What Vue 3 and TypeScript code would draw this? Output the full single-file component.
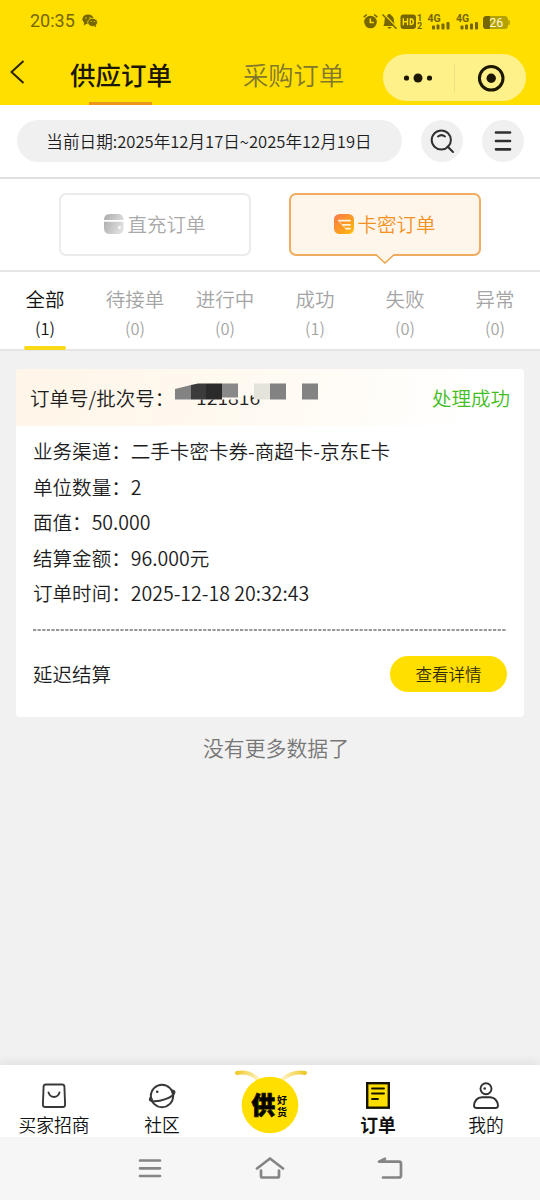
<script setup lang="ts">
interface Tab { name: string; count: number }
interface Row { label: string; value: string }

const tabs: Tab[] = [
  { name: '全部', count: 1 },
  { name: '待接单', count: 0 },
  { name: '进行中', count: 0 },
  { name: '成功', count: 1 },
  { name: '失败', count: 0 },
  { name: '异常', count: 0 },
]
const rows: Row[] = [
  { label: '业务渠道', value: '二手卡密卡券-商超卡-京东E卡' },
  { label: '单位数量', value: '2' },
  { label: '面值', value: '50.000' },
  { label: '结算金额', value: '96.000元' },
  { label: '订单时间', value: '2025-12-18 20:32:43' },
]
</script>

<template>
  <div class="screen">
    <header class="top">
      <div class="status">
        <span class="clock">20:35</span>
        <svg class="wechat" width="16" height="14" viewBox="0 0 16 14">
          <ellipse cx="6" cy="5.2" rx="5.6" ry="4.8" />
          <path d="M2 8 1.8 11.4 5 9.6Z" />
          <ellipse cx="10.6" cy="8.4" rx="4.9" ry="4.1" stroke="#ffdf00" stroke-width=".8" />
          <path d="M12 12 14 13.2 13.8 11Z" />
          <g fill="#ffdf00"><circle cx="4" cy="4" r=".7" /><circle cx="8" cy="3.7" r=".7" /><circle cx="9.2" cy="7.5" r=".6" /><circle cx="12.2" cy="7.5" r=".6" /></g>
        </svg>
        <svg class="signals" width="148" height="20" viewBox="0 0 148 20">
          <g fill="#756600">
            <circle cx="8.5" cy="11" r="6.3" />
            <path d="M1.700 6.200 4.800 3.500M12.200 3.500 15.300 6.200" stroke="#756600" stroke-width="1.600" />
            <path d="M8.300 7.500V11.500H11.800" fill="none" stroke="#ffdf00" stroke-width="1.500" />
            <path d="M21.500 14.500C23.300 12.500 21.500 7 24.500 5 25.500 4.300 26 4.200 26.200 3H28.200C28.500 4.500 32 5 32 9.500 32 12.500 32.500 13.200 34 15H21.500ZM25.500 16H29.500C29 18 26 18 25.500 16Z" />
            <path d="M21.300 2.500 35.200 16.800" stroke="#ffdf00" stroke-width="1.400" />
            <path d="M20.500 3.500 34.500 17.800" stroke="#756600" stroke-width="1.500" />
            <rect x="38.500" y="3.500" width="15.500" height="14.500" rx="3" />
            <path d="M41.300 7.200V14.300M45.500 7.200V14.300M41.300 10.800H45.500M48.300 8V13.500H49.300Q51.300 13.300 51.300 10.800T49.300 8Z" fill="none" stroke="#ffdf00" stroke-width="1.400" />
            <text x="55" y="9.500" class="micro">1</text><text x="55" y="18" class="micro">2</text>
            <text x="65.500" y="10.500" class="net">4G</text><text x="94" y="10.500" class="net">4G</text>
            <rect x="70" y="14.500" width="3" height="4" rx="1" /><rect x="74.500" y="13.500" width="3" height="5" rx="1" /><rect x="79.500" y="12.500" width="3" height="6" rx="1" /><rect x="84.500" y="11" width="3" height="7.500" rx="1" />
            <rect x="98.500" y="14.500" width="3" height="4" rx="1" /><rect x="103" y="13.500" width="3" height="5" rx="1" /><rect x="108" y="12.500" width="3" height="6" rx="1" /><rect x="113" y="11" width="3" height="7.500" rx="1" />
          </g>
          <rect x="121" y="5" width="25" height="13" rx="3.500" fill="#b5a200" />
          <path d="M128 5H124.500Q121 5 121 8.500V14.500Q121 18 124.500 18H128Z" fill="#756600" />
          <rect x="146.200" y="9" width="1.600" height="5" rx=".8" fill="#b5a200" />
          <text x="127.300" y="16" class="battery">26</text>
        </svg>
      </div>
      <nav class="nav">
        <svg class="back" width="16" height="26" viewBox="0 0 16 26"><path d="M14.500 2 2.500 13 14.500 24" fill="none" stroke="#2b2500" stroke-width="2" /></svg>
        <div class="title active">供应订单</div>
        <div class="title">采购订单</div>
        <div class="capsule">
          <svg width="30" height="12" viewBox="0 0 30 12" fill="#1c1800"><circle cx="3.500" cy="6" r="2.600" /><circle cx="15" cy="6" r="4.500" /><circle cx="26.500" cy="6" r="2.600" /></svg>
          <i></i>
          <svg width="28" height="28" viewBox="0 0 28 28"><circle cx="14.200" cy="14.300" r="11.800" fill="none" stroke="#1c1800" stroke-width="3" /><circle cx="14.200" cy="14.300" r="4.700" fill="#1c1800" /></svg>
        </div>
      </nav>
    </header>

    <section class="filter">
      <div class="date">当前日期:2025年12月17日~2025年12月19日</div>
      <div class="round">
        <svg width="26" height="26" viewBox="0 0 26 26" fill="none" stroke="#303030" stroke-width="2"><circle cx="12.300" cy="12" r="9.600" /><path d="M9 8.500Q12.500 5.800 16 8.500M18.500 18.500 24 24" stroke-linecap="round" /></svg>
      </div>
      <div class="round">
        <svg width="20" height="22" viewBox="0 0 20 22" stroke="#303030" stroke-width="2.700" stroke-linecap="round"><path d="M3 2.500H17M3 11H17M3 19.300H17" /></svg>
      </div>
    </section>

    <section class="kinds">
      <div class="kind">
        <svg width="20" height="20" viewBox="0 0 20 20">
          <defs><linearGradient id="gray" x2="1" y2=".4"><stop stop-color="#aaa" /><stop offset="1" stop-color="#dedede" /></linearGradient></defs>
          <path d="M0 6Q0 0 6 0H14Q19.500 0 19.500 6ZM0 7.700H19.500V14Q19.500 20 14 20H6Q0 20 0 14Z" fill="url(#gray)" /><circle cx="15.500" cy="13.500" r="1.300" fill="#fff" />
        </svg>
        <span>直充订单</span>
      </div>
      <div class="kind chosen">
        <svg width="20" height="20" viewBox="0 0 20 20">
          <defs><linearGradient id="orange" x2="1" y2="1"><stop stop-color="#fb7a4d" /><stop offset=".65" stop-color="#fca21c" /><stop offset="1" stop-color="#ffc316" /></linearGradient></defs>
          <rect width="20" height="20" rx="5.500" fill="url(#orange)" /><path d="M5 6.700H16M9 10.800H16M12 14.700H16" stroke="#fff3df" stroke-width="1.800" stroke-linecap="round" /><path d="M4.300 7 8.500 11.200M8.500 11 12 15" stroke="#fff3df" stroke-width=".7" />
        </svg>
        <span>卡密订单</span>
        <svg class="pointer" width="20" height="10" viewBox="0 0 20 10"><path d="M1 0H19L10 9Z" fill="#fff6eb" /><path d="M1 .7 10 9 19 .7" fill="none" stroke="#eda047" stroke-width="1.400" /></svg>
      </div>
    </section>

    <section class="tabs">
      <div v-for="(t, i) in tabs" :key="t.name" class="tab" :class="{ on: i === 0 }">
        <span class="tab-name">{{ t.name }}</span><span class="tab-count">({{ t.count }})</span>
      </div>
    </section>

    <main class="list">
      <article class="card">
        <div class="card-head">
          <span class="order">订单号/批次号：</span>
          <svg class="mask" width="150" height="30" viewBox="0 0 150 30">
            <text x="21" y="26.500" class="digits">121816</text>
            <path d="M16 5.500H87V17.500H63V21.500H16Z" fill="#fffaf1" />
            <path d="M0 11 16 7V21.500H0Z" fill="#838383" /><path d="M16 7 23 5.500H31V21.500H16Z" fill="#3b3b3b" />
            <rect x="31" y="5.500" width="16" height="16" fill="#2b2b2b" /><rect x="47" y="5.500" width="16" height="14" fill="#898989" />
            <rect x="79" y="5.500" width="16" height="16" fill="#e4e4dc" /><rect x="95" y="5.500" width="16" height="16" fill="#828282" /><rect x="127" y="5.500" width="16" height="16" fill="#838383" />
          </svg>
          <span class="success">处理成功</span>
        </div>
        <div class="details">
          <div v-for="r in rows" :key="r.label" class="row">{{ r.label }}：{{ r.value }}</div>
        </div>
        <svg class="dash" width="474" height="2"><path d="M0 1H474" stroke="#777" stroke-width="1.300" stroke-dasharray="3.200 1.400" /></svg>
        <div class="card-foot"><span>延迟结算</span><button class="view">查看详情</button></div>
      </article>
      <p class="end">没有更多数据了</p>
    </main>

    <footer class="bottom">
      <div class="item">
        <svg width="26" height="28" viewBox="0 0 26 28" fill="none" stroke="#383838" stroke-width="1.900"><path d="M5 3.500H21Q23.300 3.500 23.400 5.500L24.100 23.500Q24.100 26 22 26H4Q1.900 26 1.900 23.500L2.600 5.500Q2.700 3.500 5 3.500Z" /><path d="M7.500 11.500C9.500 17.500 16.500 17.500 18.500 11.500" stroke-linecap="round" /></svg>
        <span>买家招商</span>
      </div>
      <div class="item">
        <svg width="28" height="28" viewBox="0 0 28 28" fill="none" stroke="#383838" stroke-width="1.900"><circle cx="14" cy="15" r="11.200" /><path d="M3.500 15.500Q0 19 3.500 20C11 21.500 25.500 16.500 26.500 11.500Q26.700 9.500 24 9.500" /><circle cx="9.200" cy="10.800" r="1.300" fill="#383838" stroke="none" /><circle cx="3" cy="18.200" r="1.700" fill="#383838" stroke="none" /><circle cx="25" cy="11" r="1.700" fill="#383838" stroke="none" /></svg>
        <span>社区</span>
      </div>
      <div class="item middle">
        <svg width="76" height="66" viewBox="0 0 76 66">
          <defs><linearGradient id="wingL"><stop stop-color="#efc928" /><stop offset="1" stop-color="#fff0bd" /></linearGradient><linearGradient id="wingR"><stop stop-color="#fff0bd" /><stop offset="1" stop-color="#efc928" /></linearGradient></defs>
          <path d="M5 4Q17 2 26 10" fill="none" stroke="url(#wingL)" stroke-width="4" stroke-linecap="round" />
          <path d="M73 4Q61 2 51 10" fill="none" stroke="url(#wingR)" stroke-width="4" stroke-linecap="round" />
          <circle cx="38" cy="36" r="28.300" fill="#ffdf00" />
          <text x="19.500" y="45" class="brand">供</text><text x="45" y="35" class="sub">好</text><text x="45" y="47" class="sub">货</text>
        </svg>
      </div>
      <div class="item current">
        <svg width="26" height="28" viewBox="0 0 26 28"><rect x="2.200" y="2.200" width="21.600" height="24.500" fill="#ffdf00" stroke="#161200" stroke-width="2.400" /><path d="M7 7.500H19M7 12.500H19M7 18H13" stroke="#161200" stroke-width="1.900" stroke-linecap="round" /></svg>
        <span>订单</span>
      </div>
      <div class="item">
        <svg width="28" height="28" viewBox="0 0 28 28" fill="none" stroke="#303030" stroke-width="1.900"><circle cx="14" cy="7.700" r="5.500" /><circle cx="12.700" cy="7.500" r="1.300" fill="#303030" stroke="none" /><path d="M4.500 27Q2 27 2 24.500 3 16.500 10 16.200H18Q25 16.500 26 24.500 26 27 23.500 27Z" /></svg>
        <span>我的</span>
      </div>
    </footer>
    <div class="system">
      <svg width="24" height="22" viewBox="0 0 24 22"><path d="M2 2.500H22M2 10.300H22M2 18H22" /></svg>
      <svg width="30" height="24" viewBox="0 0 30 24"><path d="M2 11.500 15 1.500 28 11.500M6 13.500V19Q6 20.500 7.500 20.500H22.500Q24 20.500 24 19V13.500" stroke-linejoin="round" /></svg>
      <svg width="26" height="24" viewBox="0 0 26 24"><path d="M8 1.800 2 4.600H22Q24 4.600 24 6.600V18.500Q24 20.500 22 20.500H6" stroke-linejoin="round" /></svg>
    </div>
  </div>
</template>

<style>
body { margin: 0; }
</style>
<style scoped>
* { box-sizing: border-box; }
svg { display: block; flex: none; }
.screen { width: 540px; height: 1200px; display: flex; flex-direction: column; overflow: hidden; background: #f1f1f1; color: #1d1d1d; font-family: "Noto Sans CJK SC", sans-serif; font-weight: 350; }
.top { height: 105px; background: #ffdf00; flex: none; }
.status { height: 42px; display: flex; align-items: center; padding: 0 30px 0 30px; }
.clock { font: 400 18px/42px Roboto, sans-serif; color: #756600; width: 45px; white-space: nowrap; }
.wechat { margin-left: 7px; fill: #756600; }
.signals { margin-left: auto; }
.micro { font: 700 9px Roboto, sans-serif; }
.net { font: 700 10.500px Roboto, sans-serif; }
.battery { font: 400 12.500px Roboto, sans-serif; fill: #fffbd8; }
.nav { height: 63px; display: flex; align-items: flex-start; padding-left: 9px; }
.back { margin-top: 17px; }
.title { height: 63px; line-height: 64px; font-size: 25.300px; color: #82772a; margin-left: 70px; display: flex; flex-direction: column; white-space: nowrap; }
.title.active { margin-left: 45px; width: 103px; line-height: 63px; font-size: 25.500px; font-weight: 500; color: #1b1700; }
.title.active::after { content: ""; width: 63px; height: 3px; margin: -3px 0 0 19px; background: #eb951c; }
.capsule { width: 143px; height: 47px; margin: 12px 0 0 auto; margin-right: 14px; border-radius: 24px; background: #fff18a; display: flex; align-items: center; padding: 0 21px 0 20px; }
.capsule i { width: 1px; height: 28px; background: #eee080; margin: 0 auto 0 21px; }
.filter { height: 74px; flex: none; background: #fff; border-bottom: 2px solid #e0e0e0; display: flex; align-items: center; padding: 0 16.500px; }
.date { width: 385px; height: 42px; border-radius: 21px; background: #f0f0f0; line-height: 42px; text-align: center; font-size: 16.600px; white-space: nowrap; }
.round { width: 42px; height: 42px; border-radius: 50%; background: #f0f0f0; margin-left: 19px; display: grid; place-items: center; }
.kinds { height: 93px; flex: none; background: #fff; border-bottom: 2px solid #e5e5e5; display: flex; justify-content: center; gap: 38px; padding-top: 14px; }
.kind { position: relative; width: 192px; height: 63px; border: 2px solid #ebebeb; border-radius: 7px; display: flex; align-items: center; justify-content: center; gap: 3px; color: #a9a9a9; font-size: 19.500px; line-height: 28px; }
.kind span { margin-top: -1px; }
.kind > svg:first-child { margin-top: -1px; }
.chosen { border: 2px solid #f0ad61; background: #fff6eb; color: #f39122; }
.pointer { position: absolute; top: 59px; left: 84px; }
.tabs { height: 79px; flex: none; display: grid; grid-template-columns: repeat(6, 1fr); background: #fff; border-bottom: 2px solid #e5e5e5; }
.tab { display: flex; flex-direction: column; align-items: center; color: #a4a4a4; }
.tab-name { font-size: 19.500px; line-height: 28px; margin-top: 13px; }
.tab-count { font-size: 16.500px; line-height: 24px; margin-top: 3px; }
.on { color: #111; }
.on::after { content: ""; width: 42px; height: 4px; border-radius: 2px; background: #f9da17; margin-top: 6px; }
.list { flex: 1; padding: 18px 16px 0; }
.card { height: 348px; background: #fff; border-radius: 4px; overflow: hidden; font-size: 19.500px; }
.card-head { height: 57px; display: flex; align-items: center; padding: 0 14px; background: linear-gradient(100deg, #fff5e8, #fffaf2 50%, #fff 90%); white-space: nowrap; }
.order { width: 145px; }
.mask { margin-top: -9px; }
.digits { font-size: 19.500px; fill: #222; }
.success { margin-left: auto; color: #43bd1f; }
.details { padding: 7px 17px 0; }
.row { height: 35.500px; line-height: 35.500px; white-space: nowrap; font-size: 19.560px; }
.dash { margin: 18px 0 0 17px; }
.card-foot { display: flex; align-items: center; justify-content: space-between; padding: 25px 17px 0; }
.view { width: 117px; height: 36px; border: 0; padding: 0; border-radius: 18px; background: #ffdf00; color: #332b00; font: inherit; font-size: 16.500px; line-height: 36px; }
.end { margin: 15px 0 0; padding-left: 12px; font-size: 20.900px; line-height: 30px; text-align: center; color: #777; }
.bottom { height: 72px; flex: none; background: #fff; display: grid; grid-template-columns: repeat(5, 1fr); box-shadow: 0 -3px 10px #00000012; }
.item { display: flex; flex-direction: column; align-items: center; padding-top: 16px; color: #111; font-size: 17.800px; line-height: 26px; }
.item span { margin-top: 2px; }
.middle { padding-top: 4px; }
.brand { font-size: 23.500px; font-weight: 900; stroke: #161200; stroke-width: 1; }
.sub { font-size: 10px; font-weight: 700; line-height: 10px; }
.current { font-weight: 700; }
.system { height: 63px; flex: none; background: #f6f6f6; display: flex; align-items: center; justify-content: space-between; padding: 0 137px 0 138px; }
.system path { fill: none; stroke: #858585; stroke-width: 2.700; stroke-linecap: round; }
</style>
